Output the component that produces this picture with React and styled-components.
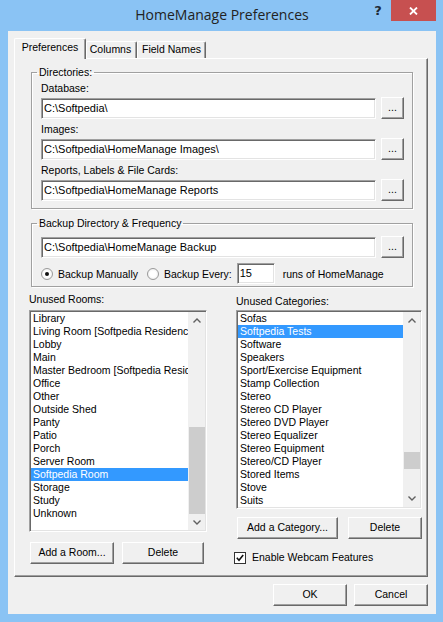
import React from 'react'
import styled, { createGlobalStyle } from 'styled-components'

const GlobalStyle = createGlobalStyle`
  html, body {
    margin: 0;
    padding: 0;
  }
  body {
    background: #8ac3f4;
    font-family: "Liberation Sans", Arial, sans-serif;
    font-size: 10.5px;
    color: #000;
  }
`

const Window = styled.div`
  width: 443px;
  height: 622px;
  box-sizing: border-box;
  padding: 0 7px 8px 8px;
  background: #8ac3f4;
  display: flex;
  flex-direction: column;
`

const TitleBar = styled.div`
  height: 31px;
  flex: none;
  display: grid;
  grid-template-columns: 1fr auto 1fr;
`

const Title = styled.div`
  grid-column: 2;
  font-family: "Open Sans", "Noto Sans", sans-serif;
  font-size: 14px;
  line-height: 30px;
  color: #222;
  white-space: nowrap;
`

const Controls = styled.div`
  grid-column: 3;
  justify-self: end;
  display: flex;
  align-items: flex-start;
`

const HelpButton = styled.div`
  width: 26px;
  height: 21px;
  font-family: "DejaVu Sans", sans-serif;
  font-weight: bold;
  font-size: 13px;
  line-height: 22px;
  text-align: center;
  color: #1e2a36;
`

const CloseButton = styled.div`
  width: 45px;
  height: 21px;
  background: #c75050;
  display: flex;
  align-items: center;
  justify-content: center;
`

const Client = styled.div`
  flex: 1;
  background: #f0f0f0;
  display: flex;
  flex-direction: column;
  padding: 7px 8px 8px 6px;
`

const TabStrip = styled.div`
  height: 20px;
  display: flex;
  align-items: flex-end;
  position: relative;
  z-index: 1;
`

const Tab = styled.div`
  box-sizing: border-box;
  width: ${p => p.$w}px;
  height: ${p => (p.$active ? 21 : 17)}px;
  margin-bottom: ${p => (p.$active ? -1 : 0)}px;
  background: #f0f0f0;
  border-top: 1px solid #fff;
  border-left: 1px solid #fff;
  border-right: 1px solid #696969;
  border-radius: 2px 2px 0 0;
  box-shadow: inset -1px 0 0 #a0a0a0;
  text-align: center;
  line-height: ${p => (p.$active ? 16 : 15)}px;
  padding-right: ${p => p.$pr || 0}px;
  white-space: nowrap;
`

const Panel = styled.div`
  flex: 1;
  box-sizing: border-box;
  border: 1px solid;
  border-color: #fff #696969 #696969 #fff;
  box-shadow: inset -1px -1px 0 #a0a0a0;
  padding: 7px 5px 0 14px;
`

const Group = styled.fieldset`
  margin: ${p => p.$mt || 0}px 9px 0 2px;
  min-width: 0;
  border: 1px solid #a0a0a0;
  box-shadow: 1px 1px 0 #fff, inset 1px 1px 0 #fff;
  padding: ${p => p.$pt}px 8px ${p => p.$pb}px 9px;
`

const Legend = styled.legend`
  margin-left: -4px;
  padding: 0 2px;
  line-height: 12px;
`

const FieldLabel = styled.div`
  line-height: 12px;
  margin-top: ${p => (p.$first ? 0 : 4)}px;
  margin-bottom: 3px;
`

const FieldRow = styled.div`
  display: flex;
  align-items: flex-end;
  gap: 5px;
`

const TextBox = styled.div`
  box-sizing: border-box;
  flex: ${p => (p.$w ? 'none' : 1)};
  width: ${p => (p.$w ? `${p.$w}px` : 'auto')};
  height: 21px;
  background: #fff;
  border: 1px solid;
  border-color: #a0a0a0 #fff #fff #a0a0a0;
  box-shadow: inset 1px 1px 0 #696969, inset -1px -1px 0 #e3e3e3;
  padding: 0 2px;
  font-size: 11px;
  line-height: 18px;
  white-space: nowrap;
  overflow: hidden;
`

const Button = styled.div`
  box-sizing: border-box;
  flex: none;
  width: ${p => p.$w}px;
  height: 22px;
  margin-left: ${p => p.$ml || 0}px;
  background: #f0f0f0;
  border: 1px solid;
  border-color: #fff #696969 #696969 #fff;
  box-shadow: inset -1px -1px 0 #a0a0a0;
  text-align: center;
  line-height: 19px;
  white-space: nowrap;
`

const RadioRow = styled.div`
  margin-top: 5px;
  height: 21px;
  display: flex;
  align-items: center;
`

const Option = styled.label`
  display: flex;
  align-items: center;
  gap: 5px;
  margin-right: ${p => p.$mr || 0}px;
`

const RadioMark = styled.span`
  box-sizing: border-box;
  width: 12px;
  height: 12px;
  border-radius: 50%;
  border: 1px solid #9a9a9a;
  background: radial-gradient(circle, #fff 40%, #e6e6e6 100%);
  display: flex;
  align-items: center;
  justify-content: center;
  &::after {
    content: '';
    width: 4px;
    height: 4px;
    border-radius: 50%;
    background: ${p => (p.$checked ? '#111' : 'transparent')};
  }
`

const RunsText = styled.span`
  margin-left: 8px;
`

const ListsGrid = styled.div`
  margin-top: 6px;
  display: grid;
  grid-template-columns: 178px 186px;
  column-gap: 29px;
`

const Column = styled.div`
  display: flex;
  flex-direction: column;
`

const ListLabel = styled.div`
  line-height: 12px;
  margin-top: ${p => p.$drop || 0}px;
  margin-bottom: ${p => 5 - (p.$drop || 0)}px;
`

const ListBox = styled.div`
  box-sizing: border-box;
  height: ${p => p.$h}px;
  background: #fff;
  border: 1px solid;
  border-color: #a0a0a0 #fff #fff #a0a0a0;
  box-shadow: inset 1px 1px 0 #696969, inset -1px -1px 0 #e3e3e3;
  padding: 1px;
  display: flex;
`

const Items = styled.div`
  flex: 1;
  min-width: 0;
  overflow: hidden;
`

const Item = styled.div`
  height: 13px;
  line-height: 13px;
  padding-left: 2px;
  white-space: nowrap;
  overflow: hidden;
  background: ${p => (p.$selected ? '#3399ff' : 'transparent')};
  color: ${p => (p.$selected ? '#fff' : '#000')};
`

const ScrollBar = styled.div`
  width: 17px;
  flex: none;
  background: #f0f0f0;
  display: flex;
  flex-direction: column;
`

const Arrow = styled.div`
  height: 17px;
  flex: none;
  display: flex;
  align-items: center;
  justify-content: center;
`

const Track = styled.div`
  flex: 1;
  display: flex;
  flex-direction: column;
`

const Thumb = styled.div`
  margin-top: ${p => p.$top}px;
  margin-left: 1px;
  height: ${p => p.$h}px;
  background: #cdcdcd;
`

const ButtonRow = styled.div`
  display: flex;
  margin-top: ${p => p.$mt}px;
  gap: ${p => p.$gap}px;
`

const CheckRow = styled.label`
  margin-top: 12px;
  margin-left: -2px;
  display: flex;
  align-items: center;
  gap: 6px;
  line-height: 13px;
`

const CheckBox = styled.span`
  box-sizing: border-box;
  width: 12px;
  height: 12px;
  border: 1px solid #333;
  background: #fff;
  display: flex;
  align-items: center;
  justify-content: center;
`

const Footer = styled.div`
  margin-top: 7px;
  display: flex;
  justify-content: flex-end;
  gap: 7px;
`

const rooms = [
  'Library', 'Living Room [Softpedia Residence]', 'Lobby', 'Main',
  'Master Bedroom [Softpedia Residence]', 'Office', 'Other', 'Outside Shed',
  'Panty', 'Patio', 'Porch', 'Server Room', 'Softpedia Room', 'Storage',
  'Study', 'Unknown',
]

const categories = [
  'Sofas', 'Softpedia Tests', 'Software', 'Speakers', 'Sport/Exercise Equipment',
  'Stamp Collection', 'Stereo', 'Stereo CD Player', 'Stereo DVD Player',
  'Stereo Equalizer', 'Stereo Equipment', 'Stereo/CD Player', 'Stored Items',
  'Stove', 'Suits',
]

const Chevron = ({ up }) => (
  <svg width="8" height="5" viewBox="0 0 8 5">
    <polyline
      points={up ? '0.5,4.5 4,1 7.5,4.5' : '0.5,0.5 4,4 7.5,0.5'}
      fill="none"
      stroke="#606060"
      strokeWidth="1.4"
    />
  </svg>
)

const List = ({ items, selected, height, thumbTop, thumbHeight }) => (
  <ListBox $h={height}>
    <Items>
      {items.map(name => (
        <Item key={name} $selected={name === selected}>{name}</Item>
      ))}
    </Items>
    <ScrollBar>
      <Arrow><Chevron up /></Arrow>
      <Track>
        <Thumb $top={thumbTop} $h={thumbHeight} />
      </Track>
      <Arrow><Chevron /></Arrow>
    </ScrollBar>
  </ListBox>
)

const DirField = ({ label, value, first }) => (
  <>
    <FieldLabel $first={first}>{label}</FieldLabel>
    <FieldRow>
      <TextBox>{value}</TextBox>
      <Button $w={23}>...</Button>
    </FieldRow>
  </>
)

export default function App() {
  return (
    <>
      <GlobalStyle />
      <Window>
        <TitleBar>
          <Title>HomeManage Preferences</Title>
          <Controls>
            <HelpButton>?</HelpButton>
            <CloseButton>
              <svg width="9" height="8" viewBox="0 0 9 8">
                <path d="M1 0.5 L8 7.5 M8 0.5 L1 7.5" stroke="#fff" strokeWidth="1.8" />
              </svg>
            </CloseButton>
          </Controls>
        </TitleBar>

        <Client>
          <TabStrip>
            <Tab $active $w={72}>Preferences</Tab>
            <Tab $w={51} $pr={2}>Columns</Tab>
            <Tab $w={69}>Field Names</Tab>
          </TabStrip>

          <Panel>
            <Group $pt={4} $pb={7}>
              <Legend>Directories:</Legend>
              <DirField first label="Database:" value="C:\Softpedia\" />
              <DirField label="Images:" value="C:\Softpedia\HomeManage Images\" />
              <DirField label="Reports, Labels & File Cards:" value="C:\Softpedia\HomeManage Reports" />
            </Group>

            <Group $mt={8} $pt={7} $pb={2}>
              <Legend>Backup Directory &amp; Frequency</Legend>
              <FieldRow>
                <TextBox>C:\Softpedia\HomeManage Backup</TextBox>
                <Button $w={23}>...</Button>
              </FieldRow>
              <RadioRow>
                <Option $mr={9}>
                  <RadioMark $checked />
                  Backup Manually
                </Option>
                <Option $mr={5}>
                  <RadioMark />
                  Backup Every:
                </Option>
                <TextBox $w={38}>15</TextBox>
                <RunsText>runs of HomeManage</RunsText>
              </RadioRow>
            </Group>

            <ListsGrid>
              <Column>
                <ListLabel>Unused Rooms:</ListLabel>
                <List items={rooms} selected="Softpedia Room" height={222} thumbTop={98} thumbHeight={87} />
                <ButtonRow $mt={10} $gap={8}>
                  <Button $w={84} $ml={1}>Add a Room...</Button>
                  <Button $w={82}>Delete</Button>
                </ButtonRow>
              </Column>
              <Column>
                <ListLabel $drop={2}>Unused Categories:</ListLabel>
                <List items={categories} selected="Softpedia Tests" height={199} thumbTop={123} thumbHeight={17} />
                <ButtonRow $mt={8} $gap={10}>
                  <Button $w={101} $ml={1}>Add a Category...</Button>
                  <Button $w={74}>Delete</Button>
                </ButtonRow>
                <CheckRow>
                  <CheckBox>
                    <svg width="8" height="8" viewBox="0 0 8 8">
                      <path d="M0.8 3.8 L3 6.2 L7.2 1" fill="none" stroke="#111" strokeWidth="1.6" />
                    </svg>
                  </CheckBox>
                  Enable Webcam Features
                </CheckRow>
              </Column>
            </ListsGrid>
          </Panel>

          <Footer>
            <Button $w={74}>OK</Button>
            <Button $w={74}>Cancel</Button>
          </Footer>
        </Client>
      </Window>
    </>
  )
}
